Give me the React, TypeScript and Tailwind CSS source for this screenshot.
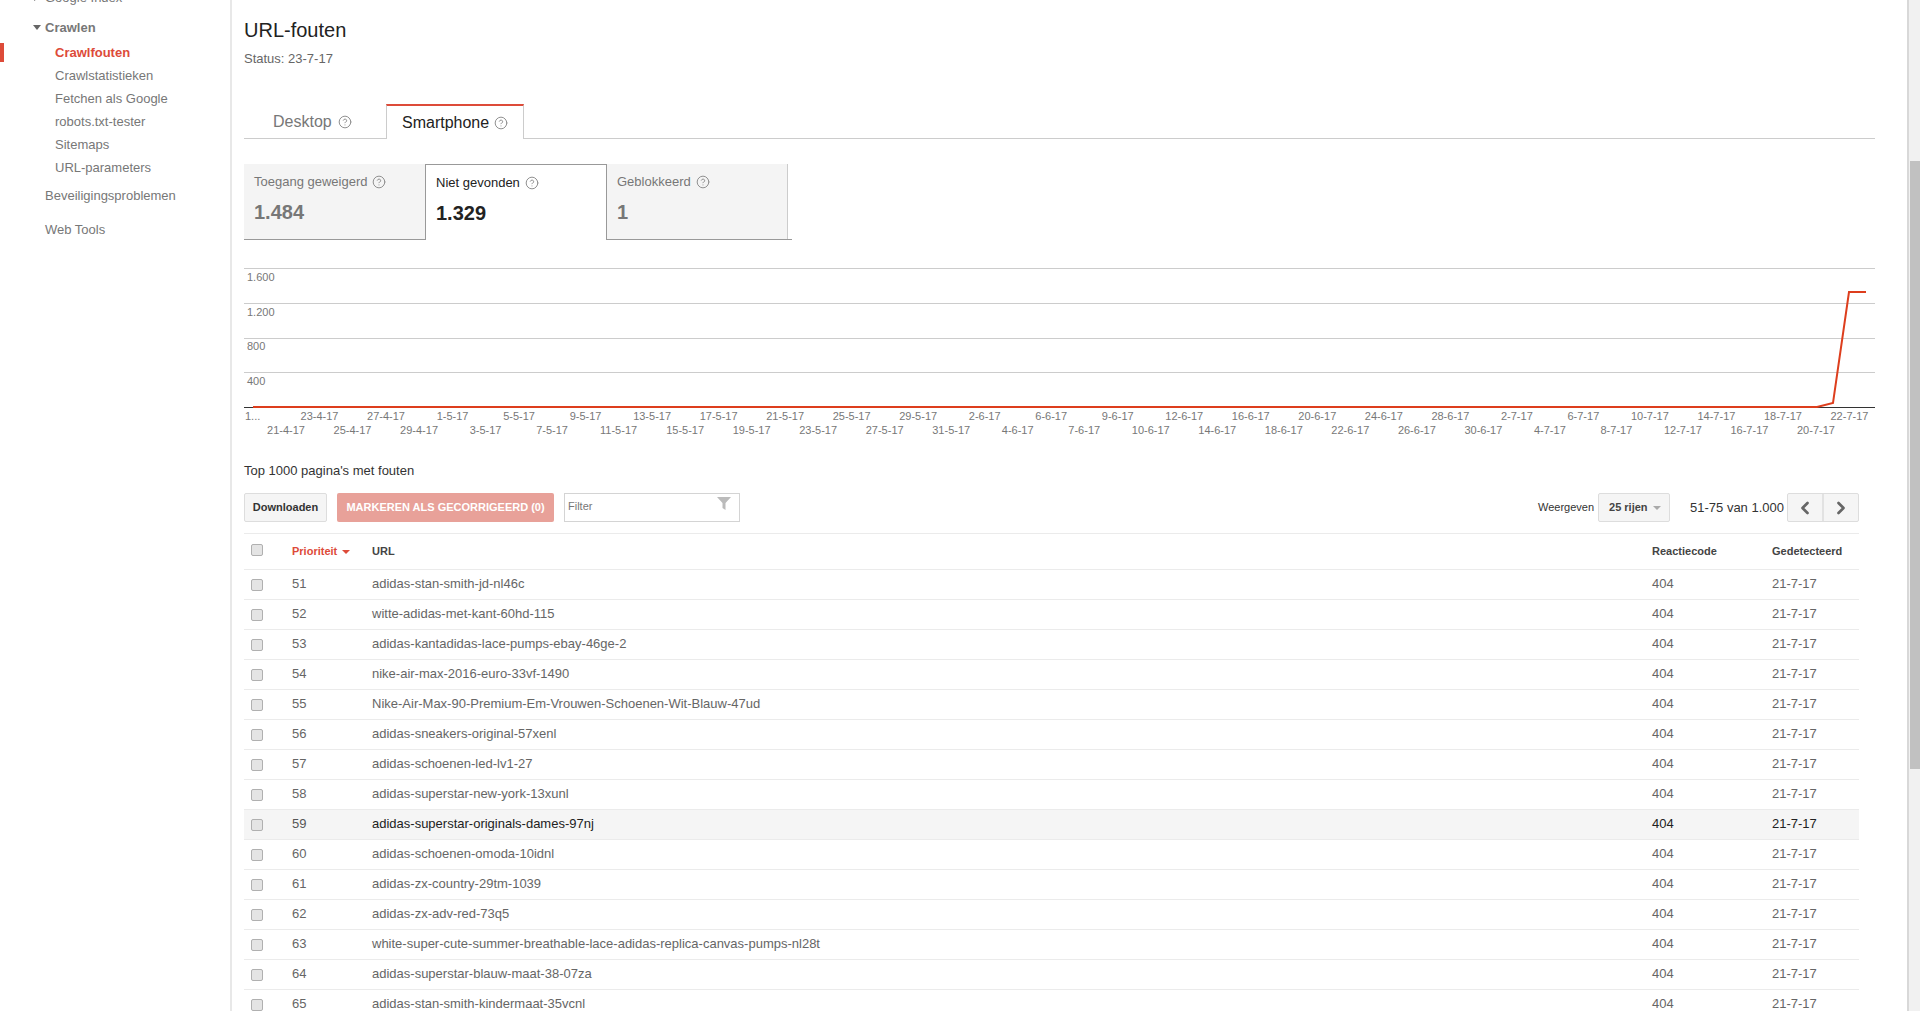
import { ChevronLeft, ChevronRight, CircleHelp } from "lucide-react";

const subItems = ["Crawlstatistieken", "Fetchen als Google", "robots.txt-tester", "Sitemaps", "URL-parameters"];

const topDates = [
  "23-4-17", "27-4-17", "1-5-17", "5-5-17", "9-5-17", "13-5-17", "17-5-17", "21-5-17",
  "25-5-17", "29-5-17", "2-6-17", "6-6-17", "9-6-17", "12-6-17", "16-6-17", "20-6-17",
  "24-6-17", "28-6-17", "2-7-17", "6-7-17", "10-7-17", "14-7-17", "18-7-17", "22-7-17",
];

const bottomDates = [
  "21-4-17", "25-4-17", "29-4-17", "3-5-17", "7-5-17", "11-5-17", "15-5-17", "19-5-17",
  "23-5-17", "27-5-17", "31-5-17", "4-6-17", "7-6-17", "10-6-17", "14-6-17", "18-6-17",
  "22-6-17", "26-6-17", "30-6-17", "4-7-17", "8-7-17", "12-7-17", "16-7-17", "20-7-17",
];

const urls = [
  "adidas-stan-smith-jd-nl46c",
  "witte-adidas-met-kant-60hd-115",
  "adidas-kantadidas-lace-pumps-ebay-46ge-2",
  "nike-air-max-2016-euro-33vf-1490",
  "Nike-Air-Max-90-Premium-Em-Vrouwen-Schoenen-Wit-Blauw-47ud",
  "adidas-sneakers-original-57xenl",
  "adidas-schoenen-led-lv1-27",
  "adidas-superstar-new-york-13xunl",
  "adidas-superstar-originals-dames-97nj",
  "adidas-schoenen-omoda-10idnl",
  "adidas-zx-country-29tm-1039",
  "adidas-zx-adv-red-73q5",
  "white-super-cute-summer-breathable-lace-adidas-replica-canvas-pumps-nl28t",
  "adidas-superstar-blauw-maat-38-07za",
  "adidas-stan-smith-kindermaat-35vcnl",
];

function Help() {
  return <CircleHelp size={14} strokeWidth={1.7} className="text-[#8f8f8f] shrink-0" />;
}

function Checkbox({ className = "" }: { className?: string }) {
  return <div className={`w-[12px] h-[12px] rounded-[2px] border border-[#b0b0b0] bg-[#e4e4e4] ${className}`} />;
}

function Sidebar() {
  return (
    <div className="w-[232px] shrink-0 border-r-2 border-[#e8e8e8] text-[13px] text-[#777] -mt-[14px]">
      <div className="h-[23px] pl-[34px] flex items-center">
        <span className="w-0 h-0 mr-[6px] border-y-[3px] border-y-transparent border-l-[5px] border-l-[#777]" />
        <span>Google Index</span>
      </div>
      <div className="h-[23px] mt-[7px] pl-[33px] flex items-center font-bold">
        <span className="w-0 h-0 mr-[4px] border-x-[4px] border-x-transparent border-t-[5px] border-t-[#666]" />
        <span>Crawlen</span>
      </div>
      <div className="mt-[2px] relative h-[23px] pl-[55px] flex items-center font-bold text-[#dd4b39]">
        <span className="absolute left-0 top-[2px] h-[19px] w-[4px] bg-[#dd4b39]" />
        Crawlfouten
      </div>
      {subItems.map((item) => (
        <div key={item} className="h-[23px] pl-[55px] flex items-center">
          {item}
        </div>
      ))}
      <div className="h-[23px] mt-[5px] pl-[45px] flex items-center">Beveiligingsproblemen</div>
      <div className="h-[23px] mt-[11px] pl-[45px] flex items-center">Web Tools</div>
    </div>
  );
}

function Tabs() {
  return (
    <div className="mt-[36px] h-[35px] flex border-b border-[#ccc] text-[16px]">
      <div className="w-[142px] pl-[29px] pt-[2px] flex items-center gap-[6px] text-[#777]">
        Desktop <Help />
      </div>
      <div className="w-[138px] h-[35px] pl-[15px] flex items-center gap-[5px] text-[#222] bg-white border-x border-[#ccc] border-t-2 border-t-[#dd4b39]">
        Smartphone <Help />
      </div>
    </div>
  );
}

function Stats() {
  return (
    <div className="mt-[25px] w-[548px] h-[76px] flex border-b border-[#999]">
      <div className="w-[181px] h-[75px] bg-[#f4f4f4] pl-[10px] pt-[10px] text-[#777]">
        <div className="flex items-center gap-[5px] text-[13px] h-[16px]">
          Toegang geweigerd <Help />
        </div>
        <div className="mt-[10px] text-[20px] leading-[24px] font-bold">1.484</div>
      </div>
      <div className="w-[182px] h-[76px] bg-white border-x border-t border-[#999] pl-[10px] pt-[10px] text-[#222]">
        <div className="flex items-center gap-[5px] text-[13px] h-[16px]">
          Niet gevonden <Help />
        </div>
        <div className="mt-[10px] text-[20px] leading-[24px] font-bold">1.329</div>
      </div>
      <div className="w-[181px] h-[75px] bg-[#f4f4f4] border-r border-[#ccc] pl-[10px] pt-[10px] text-[#777]">
        <div className="flex items-center gap-[5px] text-[13px] h-[16px]">
          Geblokkeerd <Help />
        </div>
        <div className="mt-[10px] text-[20px] leading-[24px] font-bold">1</div>
      </div>
    </div>
  );
}

function Chart() {
  return (
    <svg width="1631" height="178" viewBox="244 262 1631 178" className="block mt-[22px] text-[11px]" fill="#777">
      {[268, 303, 338, 372].map((y) => (
        <line key={y} x1="244" x2="1875" y1={y + 0.5} y2={y + 0.5} stroke="#ccc" />
      ))}
      <text x="247" y="281">1.600</text>
      <text x="247" y="316">1.200</text>
      <text x="247" y="350">800</text>
      <text x="247" y="385">400</text>
      <line x1="244" x2="1875" y1="407.5" y2="407.5" stroke="#333" />
      <polyline
        points="253,407 1817,407 1833,403 1849,292 1866,292"
        fill="none"
        stroke="#dd3e1d"
        strokeWidth="2"
      />
      <text x="245" y="420">1...</text>
      {topDates.map((d, i) => (
        <text key={d} x={319.5 + i * 66.52} y="420" textAnchor="middle">{d}</text>
      ))}
      {bottomDates.map((d, i) => (
        <text key={d} x={286 + i * 66.52} y="434" textAnchor="middle">{d}</text>
      ))}
    </svg>
  );
}

function Toolbar() {
  return (
    <div className="mt-[13px] w-[1615px] h-[29px] flex items-stretch text-[11px]">
      <button className="w-[83px] rounded-[2px] border border-[#ddd] bg-[#f5f5f5] font-bold text-[#333]">Downloaden</button>
      <button className="ml-[10px] w-[217px] rounded-[2px] bg-[#e8a199] font-bold text-white">MARKEREN ALS GECORRIGEERD (0)</button>
      <div className="ml-[10px] w-[176px] border-[1.5px] border-[#d4d4d4] pl-[3px] flex justify-between text-[#777]">
        <span className="leading-[24px]">Filter</span>
        <svg width="14" height="13" viewBox="0 0 14 13" className="mt-[3px] mr-[8px]">
          <path d="M0 0h14L8.5 6v7L5.5 11V6z" fill="#bbb" />
        </svg>
      </div>
      <div className="ml-auto flex items-center text-[#333]">Weergeven</div>
      <div className="ml-[4px] w-[72px] rounded-[2px] border border-[#ddd] bg-[#f5f5f5] font-bold text-[#444] pl-[10px] flex items-center gap-[5px]">
        25 rijen
        <span className="w-0 h-0 border-x-[4px] border-x-transparent border-t-[4px] border-t-[#aaa]" />
      </div>
      <div className="ml-[20px] flex items-center text-[13px] text-[#333]">51-75 van 1.000</div>
      <div className="ml-[3px] w-[72px] rounded-[2px] border border-[#ddd] bg-[#f5f5f5] flex text-[#666]">
        <div className="flex-1 flex items-center justify-center border-r-2 border-[#e2e2e2]">
          <ChevronLeft size={20} strokeWidth={3.2} />
        </div>
        <div className="flex-1 flex items-center justify-center">
          <ChevronRight size={20} strokeWidth={3.2} />
        </div>
      </div>
    </div>
  );
}

const rowGrid = "grid grid-cols-[48px_80px_1280px_120px_87px] items-center border-b border-[#ebebeb]";

function Table() {
  return (
    <div className="mt-[11px] w-[1615px] border-t border-[#ebebeb]">
      <div className={`${rowGrid} h-[36px] text-[11px] font-bold text-[#444]`}>
        <Checkbox className="ml-[7px] -mt-[4px]" />
        <div className="text-[#dd4b39] flex items-center gap-[5px]">
          Prioriteit
          <span className="w-0 h-0 border-x-[4px] border-x-transparent border-t-[4px] border-t-[#dd4b39]" />
        </div>
        <div>URL</div>
        <div>Reactiecode</div>
        <div>Gedetecteerd</div>
      </div>
      {urls.map((url, i) => {
        const hover = i === 8;
        return (
          <div key={url} className={`${rowGrid} h-[30px] text-[13px] ${hover ? "bg-[#f5f5f5] text-[#222]" : "text-[#666]"}`}>
            <Checkbox className="ml-[7px] mt-[1px]" />
            <div className={`-mt-[2px] ${hover ? "text-[#555]" : ""}`}>{51 + i}</div>
            <div className="-mt-[2px]">{url}</div>
            <div className="-mt-[2px]">404</div>
            <div className="-mt-[2px]">21-7-17</div>
          </div>
        );
      })}
    </div>
  );
}

export default function App() {
  return (
    <div className="h-[1011px] w-full overflow-hidden flex bg-white font-['Liberation_Sans',Arial,sans-serif]">
      <Sidebar />
      <div className="flex-1 pl-[12px] pr-[32px]">
        <div className="pt-[16px] text-[20px] leading-[28px] text-[#222]">URL-fouten</div>
        <div className="mt-[6px] text-[13px] leading-[18px] text-[#666]">Status: 23-7-17</div>
        <Tabs />
        <Stats />
        <Chart />
        <div className="mt-[22px] text-[13px] leading-[18px] text-[#333]">Top 1000 pagina's met fouten</div>
        <Toolbar />
        <Table />
      </div>
      <div className="w-[13px] shrink-0 h-full border-l-2 border-[#d8d8d8] bg-[#f1f1f1] pt-[161px]">
        <div className="ml-[1px] w-[10px] h-[608px] bg-[#c1c1c1]" />
      </div>
    </div>
  );
}
